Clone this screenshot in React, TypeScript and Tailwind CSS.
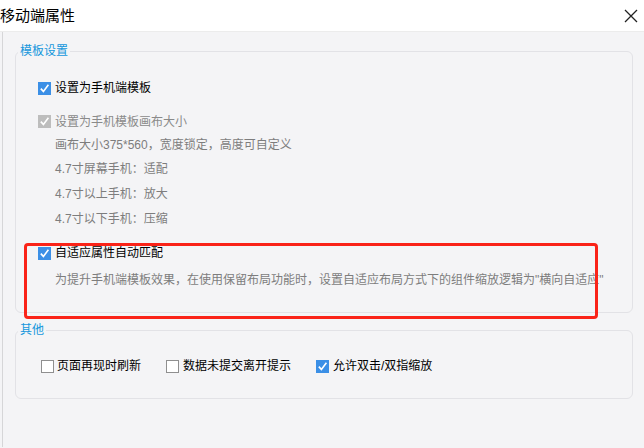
import React from 'react';

const font = { fontFamily: '"Liberation Sans", "Noto Sans CJK SC", sans-serif' };

type BoxProps = { checked?: boolean; disabled?: boolean };

const CheckBox: React.FC<BoxProps> = ({ checked, disabled }) => {
  if (!checked) {
    return <span className="block w-[13px] h-[13px] shrink-0 border border-[#8f8f8f] bg-white" />;
  }
  return (
    <span
      className={`flex items-center justify-center w-[13px] h-[13px] shrink-0 ${
        disabled ? 'bg-[#bdbdbd]' : 'bg-[#3b8fe6]'
      }`}
    >
      <svg width="11" height="11" viewBox="0 0 11 11">
        <path d="M1.8 5.6 L4.4 8.4 L9.4 1.8" fill="none" stroke="#fff" strokeWidth="1.6" />
      </svg>
    </span>
  );
};

const Row: React.FC<{ children: React.ReactNode; className?: string }> = ({ children, className }) => (
  <div className={`flex items-center ${className ?? 'h-[24px]'}`}>{children}</div>
);

export default function App() {
  return (
    <div className="relative w-[644px] h-[448px] bg-[#f4f4f6] text-[12px] leading-[16px] text-black" style={font}>
      {/* title bar */}
      <div className="flex items-center justify-between h-[32px] bg-white border-b border-[#ececec]">
        <span className="text-[15px]">移动端属性</span>
        <svg className="mr-[6px]" width="14" height="14" viewBox="0 0 14 14">
          <path d="M1 1 L13 13 M13 1 L1 13" stroke="#222" strokeWidth="1.3" />
        </svg>
      </div>

      <div className="ml-[2px] h-[415px] border-l border-[#d6d6d8] pl-[12px] pt-[11px]">
        {/* 模板设置 */}
        <fieldset className="w-[618px] border border-[#e2e2e6] rounded-[6px] p-0 m-0">
          <legend className="ml-[2px] px-[2px] text-[#1597dc] leading-[16px]">模板设置</legend>
          <div className="pl-[22px] pt-[17px] pb-[20px]">
            <Row className="h-[24px]">
              <CheckBox checked />
              <span className="ml-[4px]">设置为手机端模板</span>
            </Row>
            <Row className="h-[23px] mt-[10px] text-[#8a8a8a]">
              <CheckBox checked disabled />
              <span className="ml-[4px]">设置为手机模板画布大小</span>
            </Row>
            <Row className="h-[23px] pl-[17px] text-[#7d7d7d]">画布大小375*560，宽度锁定，高度可自定义</Row>
            <Row className="h-[25px] pl-[17px] text-[#7d7d7d]">4.7寸屏幕手机：适配</Row>
            <Row className="h-[25px] pl-[17px] text-[#7d7d7d]">4.7寸以上手机：放大</Row>
            <Row className="h-[25px] pl-[17px] text-[#7d7d7d]">4.7寸以下手机：压缩</Row>
            <Row className="h-[24px] mt-[10px]">
              <CheckBox checked />
              <span className="ml-[4px]">自适应属性自动匹配</span>
            </Row>
            <Row className="h-[24px] mt-[3px] pl-[17px] text-[#7d7d7d]">
              为提升手机端模板效果，在使用保留布局功能时，设置自适应布局方式下的组件缩放逻辑为"横向自适应"
            </Row>
          </div>
        </fieldset>

        {/* 其他 */}
        <fieldset className="mt-[9px] w-[618px] border border-[#e2e2e6] rounded-[6px] p-0 m-0">
          <legend className="ml-[2px] px-[2px] text-[#1597dc] leading-[16px]">其他</legend>
          <div className="flex items-center gap-[25px] pl-[25px] pt-[16px] pb-[20px]">
            <Row>
              <CheckBox />
              <span className="ml-[3px]">页面再现时刷新</span>
            </Row>
            <Row>
              <CheckBox />
              <span className="ml-[4px]">数据未提交离开提示</span>
            </Row>
            <Row>
              <CheckBox checked />
              <span className="ml-[4px]">允许双击/双指缩放</span>
            </Row>
          </div>
        </fieldset>
      </div>

      {/* annotation overlay */}
      <div className="absolute left-[24px] top-[243px] w-[574px] h-[76px] border-[3px] border-[#fa2318] rounded-[4px] pointer-events-none" />
    </div>
  );
}
